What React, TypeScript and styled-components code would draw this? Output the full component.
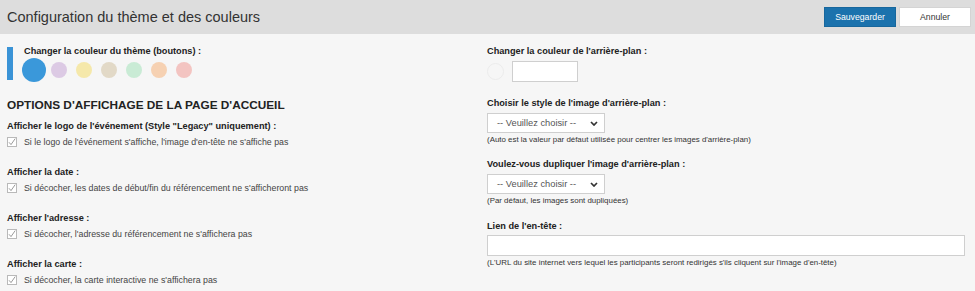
import React from 'react';
import styled, { createGlobalStyle } from 'styled-components';

const GlobalStyle = createGlobalStyle`
  html, body {
    margin: 0;
    padding: 0;
    background: #f6f6f6;
    font-family: "Liberation Sans", Arial, sans-serif;
  }
`;

const Page = styled.div`
  width: 975px;
  height: 291px;
  background: #f6f6f6;
  overflow: hidden;
`;

const Header = styled.div`
  display: flex;
  align-items: center;
  justify-content: space-between;
  height: 34px;
  padding: 0 4px 0 7px;
  background: #dddddd;
`;

const Title = styled.h1`
  margin: 0;
  font-size: 14.5px;
  font-weight: normal;
  color: #333;
`;

const Actions = styled.div`
  display: flex;
  gap: 3px;
`;

const Button = styled.button<{ $primary?: boolean }>`
  width: 72px;
  height: 20px;
  padding: 0;
  font-family: "Liberation Sans", Arial, sans-serif;
  font-size: 8.7px;
  color: ${(p) => (p.$primary ? '#fff' : '#333')};
  background: ${(p) => (p.$primary ? '#1b72ad' : '#fff')};
  border: 1px solid ${(p) => (p.$primary ? '#17679d' : '#d4d4d4')};
  border-radius: 0;
`;

const Body = styled.div`
  display: grid;
  grid-template-columns: 480px 1fr;
  padding: 11px 10px 0 7px;
`;

const Column = styled.div`
  display: flex;
  flex-direction: column;
  align-items: flex-start;
`;

const ThemeBlock = styled.div`
  display: flex;
  gap: 8px;
`;

const ThemeBar = styled.div`
  width: 6px;
  height: 33px;
  margin-top: 2px;
  background: #3a93d6;
`;

const ThemeContent = styled.div`
  display: flex;
  flex-direction: column;
`;

const Label = styled.div<{ $mt?: number; $indent?: number }>`
  margin-top: ${(p) => p.$mt ?? 0}px;
  padding-left: ${(p) => p.$indent ?? 0}px;
  font-size: 9.2px;
  line-height: 12px;
  font-weight: bold;
  color: #222;
`;

const Swatches = styled.div`
  display: flex;
  height: 25px;
  align-items: center;
`;

const SwatchSlot = styled.div`
  width: 25px;
  display: flex;
  justify-content: center;
`;

const Dot = styled.div<{ $size: number; $color: string }>`
  width: ${(p) => p.$size}px;
  height: ${(p) => p.$size}px;
  border-radius: 50%;
  background: ${(p) => p.$color};
`;

const SectionTitle = styled.h2`
  margin: 16px 0 0;
  font-size: 11.8px;
  line-height: 14px;
  font-weight: bold;
  text-transform: uppercase;
  color: #222;
`;

const CheckRow = styled.label`
  display: flex;
  align-items: center;
  gap: 7px;
  margin-top: 4px;
  height: 12px;
  font-size: 8.8px;
  color: #444;
`;

const Box = styled.span`
  width: 10px;
  height: 10px;
  box-sizing: border-box;
  border: 1px solid #b9b9b9;
  background: #fff;
  display: flex;
  align-items: center;
  justify-content: center;
`;

const ColorRow = styled.div`
  display: flex;
  align-items: center;
  gap: 8px;
  margin-top: 4px;
`;

const EmptyDot = styled.div`
  width: 17px;
  height: 17px;
  box-sizing: border-box;
  border-radius: 50%;
  border: 1px solid #ececec;
  background: #f6f6f6;
`;

const TextBox = styled.div<{ $width: string; $mt?: number }>`
  width: ${(p) => p.$width};
  height: 21px;
  margin-top: ${(p) => p.$mt ?? 0}px;
  box-sizing: border-box;
  border: 1px solid #cfcfcf;
  background: #fff;
`;

const Select = styled.div<{ $mt?: number }>`
  display: flex;
  align-items: center;
  justify-content: space-between;
  width: 118px;
  height: 20px;
  margin-top: ${(p) => p.$mt ?? 0}px;
  padding: 0 6px 0 9px;
  box-sizing: border-box;
  border: 1px solid #cfcfcf;
  background: #fff;
  font-size: 9.3px;
  color: #555;
`;

const Help = styled.div`
  margin-top: 1px;
  font-size: 7.9px;
  line-height: 11px;
  color: #333;
`;

const swatches = ['#3a98da', '#dccae4', '#f5e8aa', '#e2d9c7', '#c9ebd5', '#f6d1b2', '#f3c4c1'];

const checks = [
  {
    label: 'Afficher le logo de l\'événement (Style "Legacy" uniquement) :',
    text: "Si le logo de l'événement s'affiche, l'image d'en-tête ne s'affiche pas",
  },
  {
    label: 'Afficher la date :',
    text: 'Si décocher, les dates de début/fin du référencement ne s\'afficheront pas',
  },
  {
    label: "Afficher l'adresse :",
    text: "Si décocher, l'adresse du référencement ne s'affichera pas",
  },
  {
    label: 'Afficher la carte :',
    text: "Si décocher, la carte interactive ne s'affichera pas",
  },
];

const Check = () => (
  <Box>
    <svg width="8" height="8" viewBox="0 0 8 8">
      <path d="M1 4.3 L3 6.6 L7.2 0.6" fill="none" stroke="#808080" strokeWidth="0.8" />
    </svg>
  </Box>
);

const Chevron = () => (
  <svg width="8" height="5" viewBox="0 0 8 5">
    <path d="M1 1 L4 4 L7 1" fill="none" stroke="#333" strokeWidth="1.7" />
  </svg>
);

export default function App() {
  return (
    <Page>
      <GlobalStyle />
      <Header>
        <Title>Configuration du thème et des couleurs</Title>
        <Actions>
          <Button $primary>Sauvegarder</Button>
          <Button>Annuler</Button>
        </Actions>
      </Header>
      <Body>
        <Column>
          <ThemeBlock>
            <ThemeBar />
            <ThemeContent>
              <Label $indent={3}>Changer la couleur du thème (boutons) :</Label>
              <Swatches>
                {swatches.map((c, i) => (
                  <SwatchSlot key={c}>
                    <Dot $size={i === 0 ? 24 : 16} $color={c} />
                  </SwatchSlot>
                ))}
              </Swatches>
            </ThemeContent>
          </ThemeBlock>
          <SectionTitle>Options d'affichage de la page d'accueil</SectionTitle>
          {checks.map((c, i) => (
            <React.Fragment key={c.label}>
              <Label $mt={i === 0 ? 8 : 18}>{c.label}</Label>
              <CheckRow>
                <Check />
                {c.text}
              </CheckRow>
            </React.Fragment>
          ))}
        </Column>
        <Column>
          <Label>Changer la couleur de l'arrière-plan :</Label>
          <ColorRow>
            <EmptyDot />
            <TextBox $width="66px" />
          </ColorRow>
          <Label $mt={15}>Choisir le style de l'image d'arrière-plan :</Label>
          <Select $mt={4}>
            -- Veuillez choisir --
            <Chevron />
          </Select>
          <Help>(Auto est la valeur par défaut utilisée pour centrer les images d'arrière-plan)</Help>
          <Label $mt={13}>Voulez-vous dupliquer l'image d'arrière-plan :</Label>
          <Select $mt={4}>
            -- Veuillez choisir --
            <Chevron />
          </Select>
          <Help>(Par défaut, les images sont dupliquées)</Help>
          <Label $mt={14}>Lien de l'en-tête :</Label>
          <TextBox $width="100%" $mt={3} />
          <Help>(L'URL du site internet vers lequel les participants seront redirigés s'ils cliquent sur l'image d'en-tête)</Help>
        </Column>
      </Body>
    </Page>
  );
}
